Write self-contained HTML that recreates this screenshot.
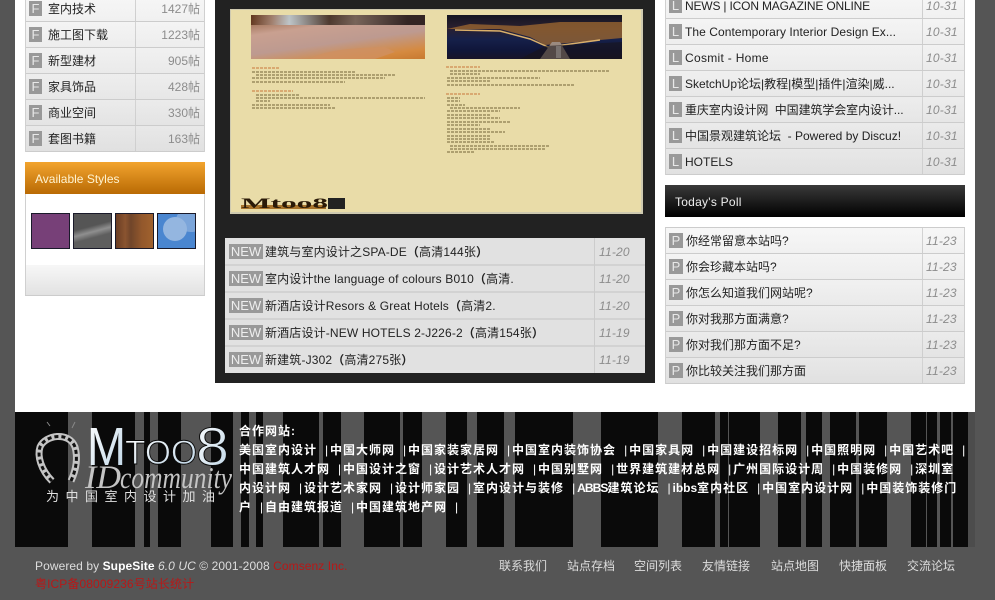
<!DOCTYPE html>
<html><head><meta charset="utf-8"><title>Mtoo8</title>
<style>
html,body{margin:0;padding:0}
body{width:995px;height:600px;overflow:hidden;position:relative;background:#555;font:12px/16px "Liberation Sans","WenQuanYi Zen Hei","Noto Sans CJK SC",sans-serif;color:#222}
div,span{box-sizing:border-box}
.a{position:absolute}
.tb{position:absolute;border-left:1px solid #d0d0d0;border-right:1px solid #d0d0d0}
.rw{height:26px;border-bottom:1px solid #ccc;position:relative;background:linear-gradient(#ffffff14,#00000003)}
.ic{position:absolute;left:3px;top:5px;width:13px;height:15px;background:#999;color:#e8e8e8;text-align:center;line-height:15px;font-size:13px}
.t{position:absolute;left:19px;top:5px;white-space:nowrap;color:#222}
.d{position:absolute;top:5px;font-style:italic;color:#8c8c8c;letter-spacing:.2px}
.c{position:absolute;top:5px;right:4px;color:#8c8c8c}
.dv{position:absolute;top:0;bottom:0;width:1px;background:#d0d0d0}
.new{position:absolute;left:4px;top:5px;width:34px;height:15px;background:#999;color:#eee;text-align:center;line-height:15px;font-size:13px}
.cr{height:27px;border-bottom:2px solid #d2d2d2;position:relative}
.cr .t{left:40px;top:5px;letter-spacing:.15px}
.cr .d{left:374px;top:5px}
.fl{position:absolute;left:239px;white-space:nowrap;color:#fff;font-weight:bold;letter-spacing:1px;line-height:19px}
.fl s{display:inline-block;box-sizing:border-box;width:13px;padding-left:8px;text-decoration:none;letter-spacing:0;font-weight:normal}
.fl u{text-decoration:none;letter-spacing:0}
.n{position:absolute;top:558px;color:#ddd;white-space:nowrap}
.sw{position:absolute;top:213px;width:39px;height:36px;border:1px solid #1a1a2a}
</style></head><body>

<div class="a" style="left:15px;top:0;width:960px;height:412px;background:#fff"></div>

<!-- left forum table -->
<div class="tb" style="left:25px;top:-4px;width:180px;background:linear-gradient(#f6f6f6,#e3e3e3)">
<div class="dv" style="left:109px"></div>
<div class="rw"><span class="ic">F</span><span class="t" style="left:22px">室内技术</span><span class="c">1427帖</span></div>
<div class="rw"><span class="ic">F</span><span class="t" style="left:22px">施工图下载</span><span class="c">1223帖</span></div>
<div class="rw"><span class="ic">F</span><span class="t" style="left:22px">新型建材</span><span class="c">905帖</span></div>
<div class="rw"><span class="ic">F</span><span class="t" style="left:22px">家具饰品</span><span class="c">428帖</span></div>
<div class="rw"><span class="ic">F</span><span class="t" style="left:22px">商业空间</span><span class="c">330帖</span></div>
<div class="rw"><span class="ic">F</span><span class="t" style="left:22px">套图书籍</span><span class="c">163帖</span></div>
</div>

<!-- available styles -->
<div class="a" style="left:25px;top:162px;width:180px;height:32px;background:linear-gradient(#f2a42e,#b96a04)"></div>
<div class="a" style="left:35px;top:171px;color:#fff3d0;white-space:nowrap">Available Styles</div>
<div class="a" style="left:25px;top:194px;width:180px;height:102px;border:1px solid #d0d0d0;border-top:0"></div>
<div class="a" style="left:26px;top:265px;width:178px;height:30px;background:linear-gradient(#f7f7f7,#e2e2e2)"></div>
<div class="a" style="left:25px;top:295px;width:180px;height:1px;background:#ccc"></div>
<div class="sw" style="left:31px;background:#774078"></div>
<div class="sw" style="left:73px;background:linear-gradient(165deg,#555 38%,#8f8f8f 52%,#5e5e5e 66%)"></div>
<div class="sw" style="left:115px;background:linear-gradient(90deg,#6a3d24,#8a5430 25%,#70452a 40%,#93582c 70%,#a0622e)"></div>
<div class="sw" style="left:157px;background:#4a86d0;overflow:hidden"><span class="a" style="left:18px;top:-6px;width:30px;height:24px;border-radius:50%;background:#7ba5da"></span><span class="a" style="left:5px;top:3px;width:24px;height:24px;border-radius:50%;background:#94b6e0"></span></div>

<!-- centre panel -->
<div class="a" style="left:215px;top:0;width:440px;height:383px;background:#222"></div>
<div class="a" style="left:230px;top:9px;width:413px;height:205px;background:#e9dca8;border:1px solid #cfcab0;border-width:1px 2px 2px 1px"></div>
<div class="a" style="left:251px;top:15px;width:174px;height:44px;background:linear-gradient(172deg,#8a5a38 0,#c9a090 30%,#bd9a90 58%,#d58a40 85%,#c87a30 100%)"></div>
<div class="a" style="left:251px;top:15px;width:174px;height:10px;background:linear-gradient(90deg,#5a3018,#a08070 12%,#c0d0d8 22%,#3a2a20 45%,#6a5a50 60%,#1a1010 90%);opacity:.85"></div>
<div class="a" style="left:447px;top:15px;width:175px;height:44px;background:linear-gradient(#141420 0,#2a2030 30%,#16204a 55%,#10163a 80%,#181428 100%)"></div>
<svg class="a" style="left:0;top:0" width="995" height="600">
<path d="M447 29L500 29L530 37L545 45L622 38L622 22L560 22L520 26L470 24Z" fill="#a06a30" opacity=".75"/>
<path d="M455 30L500 31L530 39L548 47L600 40" fill="none" stroke="#f0c070" stroke-width="1.5" opacity=".9"/>
<path d="M540 59L552 42L560 42L570 59Z" fill="#9a8a80"/>
<rect x="556" y="46" width="5" height="12" fill="#e8e0d8"/>
<path d="M520 59L545 46L622 42L622 59Z" fill="#1a1418" opacity=".55"/>
<path d="M310 59C325 50 350 48 385 47L395 52L375 59Z" fill="#d09060" opacity=".8"/>
<g stroke="#7a6c40" stroke-width="1.2" stroke-dasharray="3 1" opacity=".85">
<path d="M252 72H355M256 75H395M252 78H385M252 82H345M256 95H300M256 98H425M256 101H270M252 105H330M252 108H335"/>
<path d="M450 71H610M450 74H480M447 78H540M447 81H490M447 85H575M447 98H460M447 101H460M447 105H465M450 108H520M447 111H500M447 115H490M447 118H500M447 122H510M447 125H480M447 129H490M447 132H505M447 136H490M447 139H490M447 142H495M450 146H550M450 149H545M447 152H475"/>
</g>
<path d="M252 68H280M252 91H293M446 67H480M446 94H480" stroke="#d08a50" stroke-width="1.2" stroke-dasharray="3 1"/>
<rect x="328" y="198" width="17" height="11" fill="#222"/>
<rect x="241" y="205" width="85" height="4" fill="#a8742c"/>
<text x="241" y="208" font-family="Liberation Serif,serif" font-weight="bold" font-size="15" fill="#2a1a08" textLength="87" lengthAdjust="spacingAndGlyphs">Mtoo8</text>
</svg>

<!-- centre list -->
<div class="a" style="left:225px;top:238px;width:420px;height:135px;padding-top:1px;overflow:hidden;background:#e1e1e1">
<div class="cr"><span class="new">NEW</span><span class="t">建筑与室内设计之SPA-DE<b>（</b>高清144张<b>）</b></span><span class="d">11-20</span></div>
<div class="cr"><span class="new">NEW</span><span class="t">室内设计the language of colours B010<b>（</b>高清.</span><span class="d">11-20</span></div>
<div class="cr"><span class="new">NEW</span><span class="t">新酒店设计Resors &amp; Great Hotels<b>（</b>高清2.</span><span class="d">11-20</span></div>
<div class="cr"><span class="new">NEW</span><span class="t">新酒店设计-NEW HOTELS 2-J226-2<b>（</b>高清154张<b>）</b></span><span class="d">11-19</span></div>
<div class="cr" style="border-bottom:0"><span class="new">NEW</span><span class="t">新建筑-J302<b>（</b>高清275张<b>）</b></span><span class="d">11-19</span></div>
<div class="dv" style="left:369px;background:#ccc"></div>
</div>

<!-- right top table -->
<div class="tb" style="left:665px;top:-7px;width:300px;background:linear-gradient(#f6f6f6,#e3e3e3)">
<div class="dv" style="left:256px"></div>
<div class="rw"><span class="ic">L</span><span class="t" style="letter-spacing:-.18px">NEWS | ICON MAGAZINE ONLINE</span><span class="d" style="left:260px">10-31</span></div>
<div class="rw"><span class="ic">L</span><span class="t" style="letter-spacing:.06px">The Contemporary Interior Design Ex...</span><span class="d" style="left:260px">10-31</span></div>
<div class="rw"><span class="ic">L</span><span class="t" style="letter-spacing:.3px">Cosmit - Home</span><span class="d" style="left:260px">10-31</span></div>
<div class="rw"><span class="ic">L</span><span class="t">SketchUp论坛|教程|模型|插件|渲染|威...</span><span class="d" style="left:260px">10-31</span></div>
<div class="rw"><span class="ic">L</span><span class="t" style="letter-spacing:-.1px">重庆室内设计网&nbsp; 中国建筑学会室内设计...</span><span class="d" style="left:260px">10-31</span></div>
<div class="rw"><span class="ic">L</span><span class="t">中国景观建筑论坛&nbsp; - Powered by Discuz!</span><span class="d" style="left:260px">10-31</span></div>
<div class="rw"><span class="ic">L</span><span class="t">HOTELS</span><span class="d" style="left:260px">10-31</span></div>
</div>

<!-- poll header -->
<div class="a" style="left:665px;top:185px;width:300px;height:32px;background:linear-gradient(#3a3a3a,#000)"></div>
<div class="a" style="left:675px;top:194px;color:#eee;letter-spacing:.25px;white-space:nowrap">Today's Poll</div>

<!-- poll table -->
<div class="tb" style="left:665px;top:227px;width:300px;border-top:1px solid #ccc;background:linear-gradient(#f6f6f6,#e3e3e3)">
<div class="dv" style="left:256px"></div>
<div class="rw"><span class="ic" style="width:14px">P</span><span class="t" style="left:20px">你经常留意本站吗?</span><span class="d" style="left:260px">11-23</span></div>
<div class="rw"><span class="ic" style="width:14px">P</span><span class="t" style="left:20px">你会珍藏本站吗?</span><span class="d" style="left:260px">11-23</span></div>
<div class="rw"><span class="ic" style="width:14px">P</span><span class="t" style="left:20px">你怎么知道我们网站呢?</span><span class="d" style="left:260px">11-23</span></div>
<div class="rw"><span class="ic" style="width:14px">P</span><span class="t" style="left:20px">你对我那方面满意?</span><span class="d" style="left:260px">11-23</span></div>
<div class="rw"><span class="ic" style="width:14px">P</span><span class="t" style="left:20px">你对我们那方面不足?</span><span class="d" style="left:260px">11-23</span></div>
<div class="rw"><span class="ic" style="width:14px">P</span><span class="t" style="left:20px">你比较关注我们那方面</span><span class="d" style="left:260px">11-23</span></div>
</div>

<!-- footer band -->
<svg class="a" style="left:0;top:412px" width="995" height="135" fill="#0a0a0a">
<rect x="15" width="53" height="135"/><rect x="92" width="43" height="135"/><rect x="144" width="6" height="135"/><rect x="158" width="23" height="135"/><rect x="211" width="22" height="135"/><rect x="241" width="8" height="135"/><rect x="256" width="7" height="135"/><rect x="283" width="36" height="135"/><rect x="323" width="18" height="135"/><rect x="364" width="36" height="135"/><rect x="403" width="19" height="135"/><rect x="446" width="21" height="135"/><rect x="477" width="27" height="135"/><rect x="515" width="58" height="135"/><rect x="601" width="57" height="135"/><rect x="682" width="33" height="135"/><rect x="720" width="8" height="135"/><rect x="729" width="31" height="135"/><rect x="778" width="23" height="135"/><rect x="806" width="16" height="135"/><rect x="830" width="26" height="135"/><rect x="859" width="28" height="135"/><rect x="911" width="15" height="135"/><rect x="927" width="10" height="135"/><rect x="940" width="11" height="135"/><rect x="953" width="15" height="135"/>
<rect x="968" width="7" height="135" fill="#4c4c4c"/>
</svg>

<!-- logo -->
<svg class="a" style="left:0;top:412px" width="240" height="100">
<defs><linearGradient id="g" x1="0" y1="0" x2="1" y2="1"><stop offset="0" stop-color="#fff"/><stop offset="1" stop-color="#bcd4e6"/></linearGradient></defs>
<path d="M52 69C41 58 37 44 40 35C45 23 69 19 75 35C78 46 76 58 71 69" fill="none" stroke="#c4c4c4" stroke-width="7"/>
<path d="M52 69C41 58 37 44 40 35C45 23 69 19 75 35C78 46 76 58 71 69" fill="none" stroke="#111" stroke-width="3" stroke-dasharray="4 3"/>
<path d="M72 16l3-6M50 14l-3-4" stroke="#888" stroke-width="1"/>
<g font-family="Liberation Sans,sans-serif" fill="url(#g)">
<text x="87" y="53" font-size="54" textLength="39" lengthAdjust="spacingAndGlyphs">M</text>
<g stroke="#0a0a0a" stroke-width=".9">
<text x="125" y="52" font-size="34" textLength="72" lengthAdjust="spacingAndGlyphs">TOO</text>
<text x="196" y="53" font-size="54" textLength="33" lengthAdjust="spacingAndGlyphs">8</text>
</g>
</g>
<g font-family="Liberation Serif,serif" font-style="italic" fill="#c4c4c4">
<text x="85" y="76" font-size="33" textLength="36" lengthAdjust="spacingAndGlyphs">ID</text>
<text x="120" y="76" font-size="31" textLength="112" lengthAdjust="spacingAndGlyphs">community</text>
</g>
<text x="46" y="89" font-size="13" fill="#e0e0e0" font-family="WenQuanYi Zen Hei,Noto Sans CJK SC,sans-serif" letter-spacing="6.5">为中国室内设计加油</text>
</svg>

<!-- footer links -->
<div class="fl" style="top:422px">合作网站:</div>
<div class="fl" style="top:441px">美国室内设计<s>|</s>中国大师网<s>|</s>中国家装家居网<s>|</s>中国室内装饰协会<s>|</s>中国家具网<s>|</s>中国建设招标网<s>|</s>中国照明网<s>|</s>中国艺术吧<s>|</s></div>
<div class="fl" style="top:460px">中国建筑人才网<s>|</s>中国设计之窗<s>|</s>设计艺术人才网<s>|</s>中国别墅网<s>|</s>世界建筑建材总网<s>|</s>广州国际设计周<s>|</s>中国装修网<s>|</s>深圳室</div>
<div class="fl" style="top:479px">内设计网<s>|</s>设计艺术家网<s>|</s>设计师家园<s>|</s>室内设计与装修<s>|</s><u style="letter-spacing:-.9px">ABBS</u>建筑论坛<s>|</s><u>ibbs</u>室内社区<s>|</s>中国室内设计网<s>|</s>中国装饰装修门</div>
<div class="fl" style="top:498px">户<s>|</s>自由建筑报道<s>|</s>中国建筑地产网<s>|</s></div>

<!-- bottom -->
<div class="a" style="left:35px;top:558px;color:#ddd;white-space:nowrap;letter-spacing:.08px">Powered by <b style="color:#fff">SupeSite</b> <i>6.0 UC</i> © 2001-2008 <span style="color:#b81818">Comsenz Inc.</span></div>
<div class="a" style="left:35px;top:576px;color:#b81818;white-space:nowrap;letter-spacing:.1px">粤ICP备08009236号站长统计</div>
<span class="n" style="left:499px">联系我们</span><span class="n" style="left:567px">站点存档</span><span class="n" style="left:634px">空间列表</span><span class="n" style="left:702px">友情链接</span><span class="n" style="left:771px">站点地图</span><span class="n" style="left:839px">快捷面板</span><span class="n" style="left:907px">交流论坛</span>

</body></html>
